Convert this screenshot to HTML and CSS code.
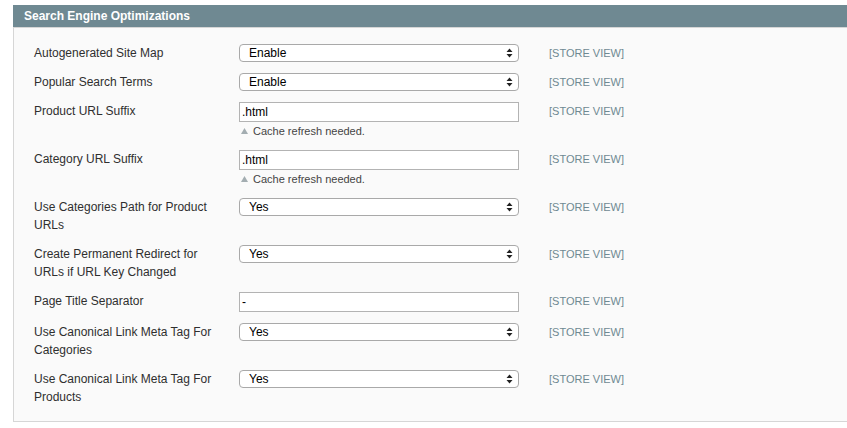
FILE: index.html
```html
<!DOCTYPE html>
<html lang="en">
<head>
  <meta charset="UTF-8">
  <meta name="viewport" content="width=device-width, initial-scale=1.0">
  <title>Search Engine Optimizations</title>
  <link rel="stylesheet" href="styles.css">
</head>
<body>
  <div class="section">
    <h2 class="section-title">Search Engine Optimizations</h2>

    <div class="fieldset">
      <div class="row">
        <label class="label">Autogenerated Site Map</label>
        <div class="value">
          <span class="select-wrap">
            <select><option>Enable</option><option>Disable</option></select>
            <svg class="arrows" width="7" height="10" viewBox="0 0 7 10"><path d="M3.5 0.5L6.5 4H0.5z M3.5 9.5L6.5 6H0.5z" fill="#222"/></svg>
          </span>
        </div>
        <span class="scope">[STORE VIEW]</span>
      </div>

      <div class="row">
        <label class="label">Popular Search Terms</label>
        <div class="value">
          <span class="select-wrap">
            <select><option>Enable</option><option>Disable</option></select>
            <svg class="arrows" width="7" height="10" viewBox="0 0 7 10"><path d="M3.5 0.5L6.5 4H0.5z M3.5 9.5L6.5 6H0.5z" fill="#222"/></svg>
          </span>
        </div>
        <span class="scope">[STORE VIEW]</span>
      </div>

      <div class="row">
        <label class="label">Product URL Suffix</label>
        <div class="value">
          <input type="text" value=".html">
          <p class="note"><svg class="note-icon" width="7" height="6" viewBox="0 0 7 6"><path d="M3.5 0L7 6H0z" fill="#a3adb1"/></svg>Cache refresh needed.</p>
        </div>
        <span class="scope">[STORE VIEW]</span>
      </div>

      <div class="row">
        <label class="label">Category URL Suffix</label>
        <div class="value">
          <input type="text" value=".html">
          <p class="note"><svg class="note-icon" width="7" height="6" viewBox="0 0 7 6"><path d="M3.5 0L7 6H0z" fill="#a3adb1"/></svg>Cache refresh needed.</p>
        </div>
        <span class="scope">[STORE VIEW]</span>
      </div>

      <div class="row">
        <label class="label">Use Categories Path for Product URLs</label>
        <div class="value">
          <span class="select-wrap">
            <select><option>Yes</option><option>No</option></select>
            <svg class="arrows" width="7" height="10" viewBox="0 0 7 10"><path d="M3.5 0.5L6.5 4H0.5z M3.5 9.5L6.5 6H0.5z" fill="#222"/></svg>
          </span>
        </div>
        <span class="scope">[STORE VIEW]</span>
      </div>

      <div class="row">
        <label class="label">Create Permanent Redirect for URLs if URL Key Changed</label>
        <div class="value">
          <span class="select-wrap">
            <select><option>Yes</option><option>No</option></select>
            <svg class="arrows" width="7" height="10" viewBox="0 0 7 10"><path d="M3.5 0.5L6.5 4H0.5z M3.5 9.5L6.5 6H0.5z" fill="#222"/></svg>
          </span>
        </div>
        <span class="scope">[STORE VIEW]</span>
      </div>

      <div class="row">
        <label class="label">Page Title Separator</label>
        <div class="value">
          <input type="text" value="-">
        </div>
        <span class="scope">[STORE VIEW]</span>
      </div>

      <div class="row">
        <label class="label">Use Canonical Link Meta Tag For Categories</label>
        <div class="value">
          <span class="select-wrap">
            <select><option>Yes</option><option>No</option></select>
            <svg class="arrows" width="7" height="10" viewBox="0 0 7 10"><path d="M3.5 0.5L6.5 4H0.5z M3.5 9.5L6.5 6H0.5z" fill="#222"/></svg>
          </span>
        </div>
        <span class="scope">[STORE VIEW]</span>
      </div>

      <div class="row">
        <label class="label">Use Canonical Link Meta Tag For Products</label>
        <div class="value">
          <span class="select-wrap">
            <select><option>Yes</option><option>No</option></select>
            <svg class="arrows" width="7" height="10" viewBox="0 0 7 10"><path d="M3.5 0.5L6.5 4H0.5z M3.5 9.5L6.5 6H0.5z" fill="#222"/></svg>
          </span>
        </div>
        <span class="scope">[STORE VIEW]</span>
      </div>
    </div>
  </div>
</body>
</html>
```

FILE: styles.css
```css
body {
  font-family: "Liberation Sans", Arial, sans-serif;
  font-size: 12px;
  color: #2f2f2f;
  margin: 5px 0 0 13px;
  background: #fff;
  overflow: hidden;
}
.section {
  width: 840px;
}
.section-title {
  background-color: #6f8992;
  color: #fff;
  font-size: 12px;
  font-weight: bold;
  line-height: 22px;
  height: 22px;
  margin: 0;
  padding: 0 0 0 11px;
}
.fieldset {
  background-color: #fafafa;
  border-top: 1px solid #d6d6d6;
  border-left: 1px solid #d6d6d6;
  border-bottom: 1px solid #d6d6d6;
  padding: 16px 0 15px 20px;
}
.row {
  display: grid;
  grid-template-columns: 205px 280px 1fr;
  align-items: start;
  margin-bottom: 11px;
}
.row:last-child {
  margin-bottom: 0;
}
.label {
  line-height: 18px;
  padding-right: 10px;
}
.value {
  display: flex;
  flex-direction: column;
}
.select-wrap {
  position: relative;
  display: block;
  height: 18px;
}
select {
  appearance: none;
  -webkit-appearance: none;
  width: 280px;
  height: 18px;
  margin: 0;
  padding: 0 20px 0 9px;
  border: 1px solid #a9a9a9;
  border-radius: 4px;
  background: #fff;
  font-family: "Liberation Sans", Arial, sans-serif;
  font-size: 12px;
  color: #000;
  line-height: 16px;
}
.arrows {
  position: absolute;
  right: 6px;
  top: 4px;
  pointer-events: none;
}
input[type="text"] {
  box-sizing: border-box;
  width: 280px;
  height: 20px;
  margin: 0;
  padding: 0 2px;
  border: 1px solid #b3b3b3;
  background: #fff;
  font-family: "Liberation Sans", Arial, sans-serif;
  font-size: 12px;
  color: #000;
}
.note {
  margin: 2px 0 0 2px;
  font-size: 11px;
  line-height: 15px;
  color: #444;
}
.note-icon {
  margin-right: 5px;
  vertical-align: 1px;
}
.scope {
  padding-left: 30px;
  font-size: 11px;
  line-height: 18px;
  color: #6f8992;
}
```
